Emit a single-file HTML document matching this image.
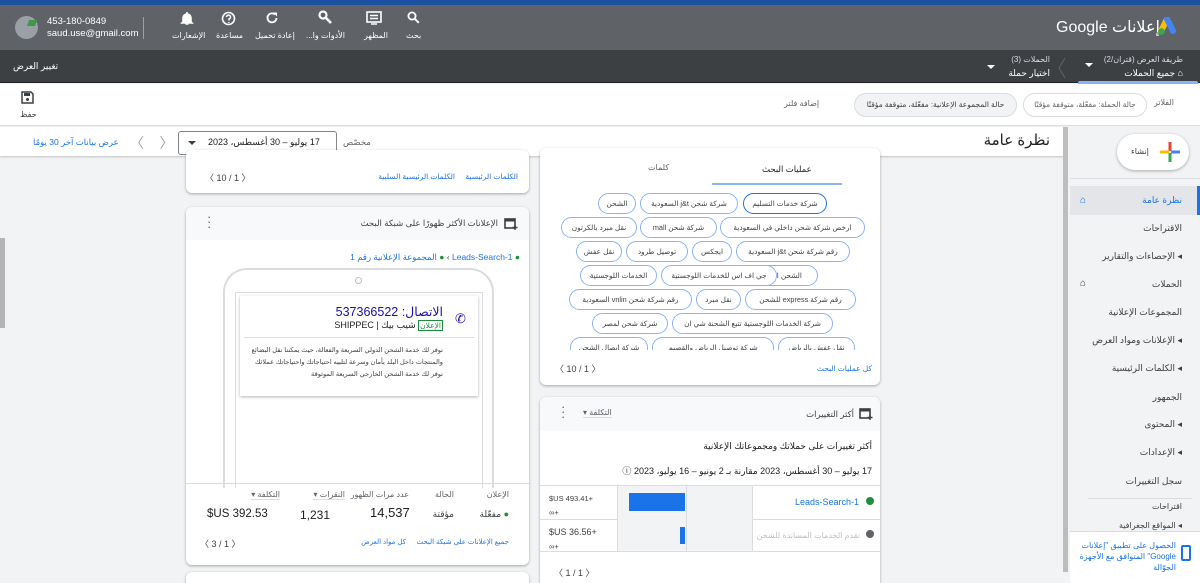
<!DOCTYPE html>
<html><head><meta charset="utf-8"><style>
*{box-sizing:border-box;margin:0;padding:0}
html{width:1200px;height:583px;overflow:hidden}
body{width:1200px;height:583px;overflow:hidden;background:#f1f3f4;font-family:"Liberation Sans","DejaVu Sans",sans-serif;font-size:10px;color:#3c4043;position:relative}
.a{position:absolute;white-space:nowrap}
.r{direction:rtl}
.card{position:absolute;background:#fff;border-radius:6px;box-shadow:0 1px 2px rgba(60,64,67,.3),0 1px 3px rgba(60,64,67,.15);overflow:hidden}
.link{color:#1a73e8}
.chip{position:absolute;height:21px;border:1px solid #8ab4f8;border-radius:11px;background:#fff;font-size:7.3px;line-height:19px;text-align:center;direction:rtl;color:#3c4043;white-space:nowrap;overflow:hidden}
.hdrtxt{color:#fff;font-size:8px}
.nav{position:absolute;right:18px;font-size:9px;direction:rtl;color:#3c4043}
</style></head><body>
<div class="a" style="left:0;top:0;width:1200px;height:5px;background:#1c4fa0"></div>
<div class="a" style="left:0;top:5px;width:1200px;height:45px;background:#5f6368"></div>
<div class="a" style="left:0;top:50px;width:1200px;height:33px;background:#3c4043;border-bottom:1px solid #202124"></div>
<div class="a" style="left:15px;top:16px;width:23px;height:23px;border-radius:50%;background:#9aa0a6"></div>
<div class="a" style="left:28px;top:20px;width:8px;height:6px;background:#3d9a4a;transform:skewX(-20deg)"></div>
<div class="a" style="left:47px;top:16px;color:#fff;font-size:9.5px;line-height:12px">453-180-0849<br>saud.use@gmail.com</div>
<div class="a" style="left:143px;top:17px;width:1px;height:22px;background:#9aa0a6"></div>
<svg class="a" style="left:180px;top:11px" width="14" height="15" viewBox="0 0 14 15"><path d="M7 1v1.5M3 11V7a4 4 0 0 1 8 0v4l1 1H2z M5.5 13h3" stroke="#fff" stroke-width="1.6" fill="#fff"/></svg>
<div class="a hdrtxt r" style="left:172px;top:31px">الإشعارات</div>
<svg class="a" style="left:221px;top:11px" width="15" height="15" viewBox="0 0 15 15"><circle cx="7.5" cy="7.5" r="6" stroke="#fff" stroke-width="1.6" fill="none"/><path d="M5.5 6a2 2 0 1 1 2.5 2v1.5M7.8 11v1" stroke="#fff" stroke-width="1.5" fill="none"/></svg>
<div class="a hdrtxt r" style="left:216px;top:31px">مساعدة</div>
<svg class="a" style="left:265px;top:11px" width="14" height="14" viewBox="0 0 14 14"><path d="M11.5 7A4.5 4.5 0 1 1 10 3.5" stroke="#fff" stroke-width="1.8" fill="none"/><path d="M8 1.5h4v4z" fill="#fff"/></svg>
<div class="a hdrtxt r" style="left:255px;top:31px">إعادة تحميل</div>
<svg class="a" style="left:318px;top:10px" width="15" height="15" viewBox="0 0 15 15"><circle cx="5" cy="5" r="3.5" stroke="#fff" stroke-width="2.2" fill="none"/><path d="M7 7l6 6" stroke="#fff" stroke-width="2.6"/></svg>
<div class="a hdrtxt r" style="left:306px;top:31px">الأدوات وا...</div>
<svg class="a" style="left:366px;top:11px" width="16" height="14" viewBox="0 0 16 14"><rect x="1" y="1" width="14" height="10" fill="none" stroke="#fff" stroke-width="1.6"/><path d="M4 4.5h8M4 7.5h8M5 13h6" stroke="#fff" stroke-width="1.4"/></svg>
<div class="a hdrtxt r" style="left:364px;top:31px">المظهر</div>
<svg class="a" style="left:407px;top:11px" width="13" height="13" viewBox="0 0 13 13"><circle cx="5" cy="5" r="3.6" stroke="#fff" stroke-width="1.8" fill="none"/><path d="M7.8 7.8l4 4" stroke="#fff" stroke-width="2"/></svg>
<div class="a hdrtxt r" style="left:406px;top:31px">بحث</div>
<div class="a r" style="left:1056px;top:17px;color:#fff;font-size:16px">إعلانات <span style="font-family:'Liberation Sans'">Google</span></div>
<svg class="a" style="left:1158px;top:17px" width="24" height="20" viewBox="0 0 24 20"><path d="M9 2l-6 12" stroke="#fbbc04" stroke-width="6" stroke-linecap="round"/><path d="M9 2l6 12" stroke="#4285f4" stroke-width="6" stroke-linecap="round"/><circle cx="3.5" cy="14.5" r="3.3" fill="#34a853"/></svg>
<div class="a r" style="left:13px;top:61px;color:#fff;font-size:9px">تغيير العرض</div>
<div class="a r" style="right:17px;top:55px;color:#dadce0;font-size:8px">طريقة العرض (قتران/2)</div>
<div class="a r" style="right:17px;top:68px;color:#fff;font-size:9px">⌂ جميع الحملات</div>
<div class="a" style="left:1085px;top:63px;width:0;height:0;border-left:4px solid transparent;border-right:4px solid transparent;border-top:4px solid #fff"></div>
<div class="a" style="left:1078px;top:81px;width:120px;height:3px;background:#8ab4f8;border-radius:2px 2px 0 0"></div>
<svg class="a" style="left:1058px;top:57px" width="8" height="22"><path d="M7 1L1 11l6 10" stroke="#5f6368" fill="none"/></svg>
<div class="a r" style="right:150px;top:55px;color:#dadce0;font-size:8px">الحملات (3)</div>
<div class="a r" style="right:150px;top:68px;color:#fff;font-size:9px">اختيار حملة</div>
<div class="a" style="left:987px;top:65px;width:0;height:0;border-left:4px solid transparent;border-right:4px solid transparent;border-top:4px solid #fff"></div>
<div class="a" style="left:0;top:84px;width:1200px;height:42px;background:#fff;border-bottom:1px solid #dadce0"></div>
<svg class="a" style="left:21px;top:91px" width="13" height="13" viewBox="0 0 13 13"><path d="M1 1h9l2 2v9H1z" fill="none" stroke="#3c4043" stroke-width="1.5"/><rect x="3" y="2" width="6" height="3" fill="#3c4043"/><circle cx="6.5" cy="8.5" r="1.5" fill="#3c4043"/></svg>
<div class="a r" style="left:20px;top:110px;font-size:8px">حفظ</div>
<div class="a r" style="right:26px;top:98px;font-size:8px;color:#5f6368">الفلاتر</div>
<div class="a r" style="left:1023px;top:93px;width:124px;height:24px;border:1px solid #dadce0;border-radius:12px;font-size:7.5px;line-height:22px;text-align:center;color:#5f6368">حالة الحملة: مفعّلة، متوقفة مؤقتًا</div>
<div class="a r" style="left:854px;top:93px;width:163px;height:24px;border:1px solid #dadce0;border-radius:12px;background:#f1f3f4;font-size:7.5px;line-height:22px;text-align:center;color:#3c4043">حالة المجموعة الإعلانية: مفعّلة، متوقفة مؤقتًا</div>
<div class="a r" style="left:784px;top:99px;font-size:8px;color:#5f6368">إضافة فلتر</div>
<div class="a" style="left:0;top:127px;width:1065px;height:29px;background:#fff;box-shadow:0 1px 2px rgba(0,0,0,.2)"></div>
<div class="a r" style="right:150px;top:131px;font-size:15px;color:#202124">نظرة عامة</div>
<div class="a" style="left:178px;top:131px;width:159px;height:24px;border:1px solid #80868b;border-radius:3px"></div>
<div class="a r" style="left:208px;top:137px;font-size:9px;color:#202124">17 يوليو – 30 أغسطس، 2023</div>
<div class="a" style="left:188px;top:141px;width:0;height:0;border-left:4px solid transparent;border-right:4px solid transparent;border-top:4px solid #3c4043"></div>
<div class="a r" style="left:343px;top:137px;font-size:8.5px;color:#5f6368">مخصّص</div>
<div class="a" style="left:130px;top:133px;font-size:14px;color:#9aa0a6">〈&nbsp;&nbsp;&nbsp;&nbsp;〉</div>
<div class="a r link" style="left:33px;top:137px;font-size:8.5px">عرض بيانات آخر 30 يومًا</div>
<div class="a" style="left:1063px;top:127px;width:5px;height:445px;background:#bdbdbd"></div>
<div class="a" style="left:0;top:238px;width:5px;height:90px;background:#b5b5b5"></div>
<div class="a" style="left:1070px;top:127px;width:130px;height:456px;background:#f1f3f4"></div>
<div class="a" style="left:1117px;top:134px;width:72px;height:36px;background:#fff;border-radius:18px;box-shadow:0 1px 3px rgba(0,0,0,.3)"></div>
<div class="a r" style="left:1131px;top:147px;font-size:8px">إنشاء</div>
<svg class="a" style="left:1160px;top:142px" width="20" height="20"><rect x="8.5" y="0" width="3" height="9" fill="#ea4335"/><rect x="11" y="8.5" width="9" height="3" fill="#4285f4"/><rect x="8.5" y="11" width="3" height="9" fill="#34a853"/><rect x="0" y="8.5" width="9" height="3" fill="#fbbc04"/></svg>
<div class="a" style="left:1070px;top:178px;width:130px;height:1px;background:#dadce0"></div>
<div class="a" style="left:1070px;top:186px;width:130px;height:29px;background:#e3e5e8"></div>
<div class="a" style="left:1197px;top:186px;width:3px;height:29px;background:#1a73e8"></div>
<div class="a" style="left:1080px;top:195px;font-size:10px;color:#1a73e8">⌂</div>
<div class="nav" style="top:195px;color:#1a73e8">نظرة عامة</div>
<div class="nav" style="top:223px">الاقتراحات</div>
<div class="nav" style="top:251px">◂ الإحصاءات والتقارير</div>
<div class="a" style="left:1080px;top:278px;font-size:10px">⌂</div>
<div class="nav" style="top:279px">الحملات</div>
<div class="nav" style="top:307px">المجموعات الإعلانية</div>
<div class="nav" style="top:335px">◂ الإعلانات ومواد العرض</div>
<div class="nav" style="top:363px">◂ الكلمات الرئيسية</div>
<div class="nav" style="top:392px">الجمهور</div>
<div class="nav" style="top:419px">◂ المحتوى</div>
<div class="nav" style="top:447px">◂ الإعدادات</div>
<div class="nav" style="top:476px">سجل التغييرات</div>
<div class="a" style="left:1088px;top:498px;width:104px;height:1px;background:#dadce0"></div>
<div class="nav" style="top:502px;font-size:8px">اقتراحات</div>
<div class="nav" style="top:521px;font-size:8px">◂ المواقع الجغرافية</div>
<div class="a" style="left:1070px;top:531px;width:130px;height:52px;background:#fff;border-top:1px solid #dadce0"></div>
<div class="a r link" style="right:24px;top:540px;font-size:8px;line-height:11px;white-space:normal;width:100px;text-align:right">الحصول على تطبيق "إعلانات Google" المتوافق مع الأجهزة الجوّالة</div>
<div class="a" style="left:1181px;top:545px;width:10px;height:16px;border:2px solid #1a73e8;border-radius:2px"></div>
<div class="card" style="left:186px;top:150px;width:343px;height:43px"></div>
<div class="a" style="left:205px;top:171px;font-size:9px;color:#3c4043">〈 10 / 1 〉</div>
<div class="a r link" style="right:682px;top:172px;font-size:7.5px">الكلمات الرئيسية</div>
<div class="a r link" style="right:745px;top:172px;font-size:7.5px">الكلمات الرئيسية السلبية</div>
<div class="card" style="left:186px;top:207px;width:343px;height:358px">
 <div style="position:absolute;left:0;top:0;width:343px;height:33px;background:#f8f9fa"></div>
</div>
<svg class="a" style="left:504px;top:217px" width="14" height="13"><rect x="1" y="2" width="10" height="9" fill="none" stroke="#3c4043" stroke-width="1.6"/><rect x="1" y="2" width="10" height="2.5" fill="#3c4043"/><path d="M11 8v5M8.5 10.5h5" stroke="#3c4043" stroke-width="1.4"/></svg>
<div class="a r" style="right:702px;top:218px;font-size:8.5px">الإعلانات الأكثر ظهورًا على شبكة البحث</div>
<div class="a" style="left:207px;top:214px;font-size:13px;line-height:5px;color:#5f6368">·<br>·<br>·</div>
<div class="a r" style="right:680px;top:252px;font-size:8.5px"><span style="color:#1e8e3e">●</span> <span class="link">Leads-Search-1</span> › <span style="color:#1e8e3e">●</span> <span class="link">المجموعة الإعلانية رقم 1</span></div>
<div class="a" style="left:223px;top:268px;width:271px;height:220px;border:2px solid #dadce0;border-bottom:none;border-radius:24px 24px 0 0"></div>
<div class="a" style="left:235px;top:292px;width:248px;height:196px;border:1px solid #dadce0;border-bottom:none"></div>
<div class="a" style="left:355px;top:277px;width:7px;height:7px;border:1px solid #bdc1c6;border-radius:50%"></div>
<div class="a" style="left:240px;top:296px;width:238px;height:100px;background:#fff;box-shadow:0 1px 3px rgba(0,0,0,.3)"></div>
<div class="a" style="left:455px;top:311px;font-size:13px;color:#1a0dab">✆</div>
<div class="a r" style="right:757px;top:304px;font-size:12.5px;color:#1a0dab">الاتصال: 537366522</div>
<div class="a r" style="right:757px;top:320px;font-size:9px;color:#202124"><span style="border:1px solid #1e8e3e;color:#1e8e3e;font-size:7.5px;padding:0 1px">الإعلان</span> شيب بيك | SHIPPEC</div>
<div class="a" style="left:244px;top:337px;width:230px;height:1px;background:#dadce0"></div>
<div class="a r" style="right:757px;top:345px;font-size:6.6px;line-height:12px;text-align:right;color:#3c4043">نوفر لك خدمة الشحن الدولي السريعة والفعالة، حيث يمكننا نقل البضائع<br>والمنتجات داخل البلد بأمان وسرعة لتلبيه احتياجاتك واحتياجاتك عملائك<br>نوفر لك خدمة الشحن الخارجي السريعة الموثوقة</div>
<div class="a" style="left:186px;top:483px;width:343px;height:1px;background:#dadce0"></div>
<div class="a r" style="right:691px;top:490px;font-size:8px;color:#5f6368">الإعلان</div>
<div class="a r" style="right:746px;top:490px;font-size:8px;color:#5f6368">الحالة</div>
<div class="a r" style="right:791px;top:490px;font-size:8px;color:#5f6368">عدد مرات الظهور</div>
<div class="a r" style="right:855px;top:490px;font-size:8px;color:#5f6368;border-bottom:1px solid #dadce0">النقرات ▾</div>
<div class="a r" style="right:920px;top:490px;font-size:8px;color:#5f6368;border-bottom:1px solid #dadce0">التكلفة ▾</div>
<div class="a r" style="right:691px;top:509px;font-size:9px"><span style="color:#1e8e3e">●</span> مفعّلة</div>
<div class="a r" style="right:746px;top:509px;font-size:9px">مؤقتة</div>
<div class="a" style="left:370px;top:505px;font-size:13px;color:#202124">14,537</div>
<div class="a" style="left:300px;top:508px;font-size:12px;color:#202124">1,231</div>
<div class="a" style="left:207px;top:508px;font-size:11.5px;color:#202124">$US 392.53</div>
<div class="a" style="left:200px;top:537px;font-size:9px">〈 3 / 1 〉</div>
<div class="a r link" style="right:691px;top:538px;font-size:7px">جميع الإعلانات على شبكة البحث</div>
<div class="a r link" style="right:794px;top:538px;font-size:7px">كل مواد العرض</div>
<div class="card" style="left:186px;top:572px;width:343px;height:20px"></div>
<div class="card" style="left:540px;top:148px;width:340px;height:237px"></div>
<div class="a r" style="left:762px;top:164px;font-size:8.5px;color:#202124">عمليات البحث</div>
<div class="a r" style="left:648px;top:163px;font-size:8px;color:#5f6368">كلمات</div>
<div class="a" style="left:712px;top:183px;width:130px;height:2px;background:#8ab4f8"></div>
<div class="a" style="left:540px;top:185px;width:340px;height:165px;overflow:hidden">
<div class="chip" style="left:203px;top:8px;width:84px;border-color:#1a73e8">شركة خدمات التسليم</div>
<div class="chip" style="left:100px;top:8px;width:98px">شركة شحن j&amp;t السعودية</div>
<div class="chip" style="left:58px;top:8px;width:38px">الشحن</div>
<div class="chip" style="left:180px;top:32px;width:145px">ارخص شركة شحن داخلي في السعودية</div>
<div class="chip" style="left:100px;top:32px;width:77px">شركة شحن mall</div>
<div class="chip" style="left:21px;top:32px;width:76px">نقل مبرد بالكرتون</div>
<div class="chip" style="left:196px;top:56px;width:114px">رقم شركة شحن j&amp;t السعودية</div>
<div class="chip" style="left:152px;top:56px;width:40px">ايجكس</div>
<div class="chip" style="left:86px;top:56px;width:62px">توصيل طرود</div>
<div class="chip" style="left:36px;top:56px;width:46px">نقل عفش</div>
<div class="chip" style="left:202px;top:80px;width:76px">الشحن السريع</div>
<div class="chip" style="left:121px;top:80px;width:116px">جي اف اس للخدمات اللوجستية</div>
<div class="chip" style="left:40px;top:80px;width:77px">الخدمات اللوجستية</div>
<div class="chip" style="left:205px;top:104px;width:111px">رقم شركة express للشحن</div>
<div class="chip" style="left:156px;top:104px;width:45px">نقل مبرد</div>
<div class="chip" style="left:29px;top:104px;width:123px">رقم شركة شحن vnlin السعودية</div>
<div class="chip" style="left:132px;top:128px;width:161px">شركة الخدمات اللوجستية تتبع الشحنة شي ان</div>
<div class="chip" style="left:52px;top:128px;width:76px">شركة شحن لمصر</div>
<div class="chip" style="left:238px;top:152px;width:77px">نقل عفش بالرياض</div>
<div class="chip" style="left:112px;top:152px;width:122px">شركة توصيل الرياض والقصيم</div>
<div class="chip" style="left:30px;top:152px;width:78px">شركة ايصال الشحن</div>
</div>
<div class="a" style="left:555px;top:362px;font-size:9px">〈 10 / 1 〉</div>
<div class="a r link" style="right:328px;top:364px;font-size:7.5px">كل عمليات البحث</div>
<div class="card" style="left:540px;top:397px;width:340px;height:200px">
 <div style="position:absolute;left:0;top:0;width:340px;height:34px;background:#f8f9fa"></div>
</div>
<svg class="a" style="left:859px;top:407px" width="14" height="13"><rect x="1" y="2" width="10" height="9" fill="none" stroke="#3c4043" stroke-width="1.6"/><rect x="1" y="2" width="10" height="2.5" fill="#3c4043"/><path d="M11 8v5M8.5 10.5h5" stroke="#3c4043" stroke-width="1.4"/></svg>
<div class="a r" style="right:346px;top:409px;font-size:8.5px">أكثر التغييرات</div>
<div class="a r" style="left:583px;top:408px;font-size:8px;color:#5f6368;border-bottom:1px solid #dadce0">التكلفة ▾</div>
<div class="a" style="left:561px;top:404px;font-size:13px;line-height:5px;color:#5f6368">·<br>·<br>·</div>
<div class="a r" style="right:328px;top:441px;font-size:9px;color:#202124">أكثر تغييرات على حملاتك ومجموعاتك الإعلانية</div>
<div class="a r" style="right:328px;top:464px;font-size:9px;color:#202124">17 يوليو – 30 أغسطس، 2023 مقارنة بـ 2 يونيو – 16 يوليو، 2023 ⓘ</div>
<div class="a" style="left:540px;top:485px;width:340px;height:1px;background:#dadce0"></div>
<div class="a" style="left:540px;top:519px;width:340px;height:1px;background:#dadce0"></div>
<div class="a" style="left:540px;top:551px;width:340px;height:1px;background:#dadce0"></div>
<div class="a" style="left:617px;top:486px;width:135px;height:65px;background:#f1f3f4"></div>
<div class="a" style="left:617px;top:486px;width:1px;height:65px;background:#dadce0"></div>
<div class="a" style="left:686px;top:486px;width:1px;height:65px;background:#dadce0"></div>
<div class="a" style="left:752px;top:486px;width:1px;height:65px;background:#dadce0"></div>
<div class="a" style="left:629px;top:493px;width:56px;height:18px;background:#1a73e8"></div>
<div class="a" style="left:680px;top:527px;width:5px;height:17px;background:#1a73e8"></div>
<div class="a" style="left:866px;top:497px;width:8px;height:8px;border-radius:50%;background:#1e8e3e"></div>
<div class="a link" style="left:795px;top:497px;font-size:9px">Leads-Search-1</div>
<div class="a" style="left:866px;top:530px;width:8px;height:8px;border-radius:50%;background:#5f6368"></div>
<div class="a r" style="right:340px;top:531px;font-size:8px;color:#bdc1c6">تقدم الخدمات المساندة للشحن</div>
<div class="a" style="left:549px;top:492px;font-size:7.5px;line-height:14px;color:#3c4043">$US 493.41+<br>∞+</div>
<div class="a" style="left:549px;top:525px;font-size:9px;line-height:14px;color:#3c4043">$US 36.56+<br><span style="font-size:7.5px">∞+</span></div>
<div class="a" style="left:554px;top:566px;font-size:9px">〈 1 / 1 〉</div>
</body></html>
